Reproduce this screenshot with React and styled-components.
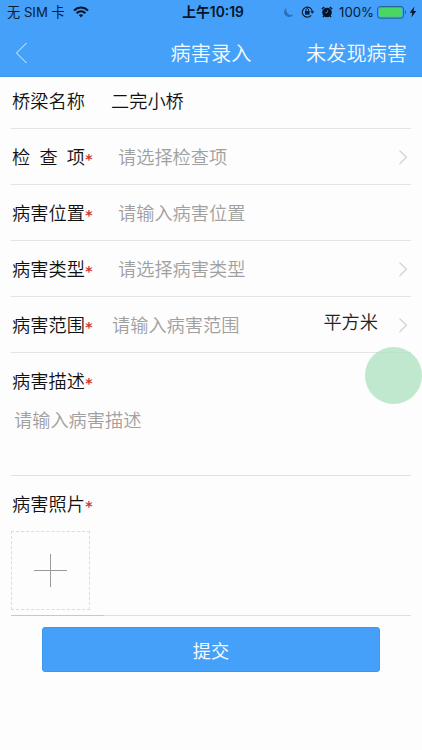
import styled, { createGlobalStyle } from 'styled-components';

const GlobalStyle = createGlobalStyle`
  * {
    box-sizing: border-box;
  }

  body {
    margin: 0;
    background-color: #fdfdfd;
    font-family: "Noto Sans CJK SC", sans-serif;
    font-weight: 350;
  }
`;

const Wrapper = styled.div`
  position: relative;
  height: 750px;
  overflow: hidden;
  background-color: #fdfdfd;
`;

const Header = styled.header`
  height: 77px;
  background-color: #44a0f8;
  border-bottom: 1px solid #4497e2;
`;

const StatusBar = styled.div`
  height: 24px;
  display: grid;
  grid-template-columns: 1fr auto 1fr;
  align-items: center;
  padding: 0 5px 0 7px;
  color: #0a1c33;
  font-family: Inter, "Noto Sans CJK SC", sans-serif;
  font-size: 13.2px;
  font-weight: 400;
  line-height: 24px;
  white-space: nowrap;
`;

const Carrier = styled.div`
  display: flex;
  align-items: center;
  gap: 8px;
`;

const Time = styled.div`
  padding-left: 2px;
  font-size: 13.8px;
  font-weight: 600;
  color: #061326;
`;

const StatusIcons = styled.div`
  display: flex;
  align-items: center;
  justify-content: flex-end;
`;

const IconSlot = styled.span`
  display: flex;
  margin-left: ${(props) => props.$left};
`;

const Percent = styled.span`
  margin: 0 3px 0 6px;
`;

const NavBar = styled.div`
  height: 53px;
  display: grid;
  grid-template-columns: 1fr auto 1fr;
  align-items: center;
  padding: 5px 15px 0 15px;
  color: #f4faff;
  font-size: 20.2px;
  line-height: 30px;
  white-space: nowrap;
`;

const NavAction = styled.div`
  text-align: right;
`;

const Form = styled.main`
  padding: 0 11px;
  font-size: 18.2px;
  line-height: 26px;
  color: #111;
  white-space: nowrap;
`;

const Row = styled.div`
  height: ${(props) => (props.$first ? '52px' : '56px')};
  display: flex;
  align-items: center;
  padding-bottom: ${(props) => (props.$first ? '5px' : '1px')};
  border-bottom: 1px solid #e4e4e4;
`;

const Block = styled.div`
  height: ${(props) => props.$height};
  padding-top: 14px;
  border-bottom: 1px solid #e0e0e0;
`;

const LabelBox = styled.div`
  height: 26px;
  display: flex;
  align-items: center;
  padding-left: 1px;
`;

const LabelText = styled.div`
  width: 73px;
  display: flex;
  justify-content: space-between;
`;

const Star = styled.span`
  width: 8px;
  padding-top: 5px;
  text-align: center;
  font-family: "DejaVu Sans", sans-serif;
  font-size: 14px;
  font-weight: 700;
  line-height: 18px;
  color: #c9353a;
`;

const Value = styled.div`
  flex: 1;
  margin-left: ${(props) => props.$left};
  color: ${(props) => (props.$filled ? '#111' : '#a0a0a0')};
`;

const Unit = styled.div`
  margin-right: 20px;
  padding-bottom: 6px;
  color: #222;
`;

const Chevron = styled.svg`
  width: 10px;
  height: 16px;
  margin: 1px 3px 0 0;
`;

const Description = styled.div`
  padding: 13px 0 0 3px;
  color: #a0a0a0;
`;

const AddPhoto = styled.div`
  width: 79px;
  height: 79px;
  margin-top: 15px;
  display: flex;
  align-items: center;
  justify-content: center;
  border: 1px dashed #dcdcdc;
`;

const PhotoLine = styled.div`
  width: 93px;
  height: 1px;
  margin-top: 5px;
  background-color: #c8c8c8;
`;

const SubmitButton = styled.button`
  display: block;
  width: 338px;
  height: 45px;
  margin: 11px 0 0 31px;
  padding: 0;
  border: 1px solid #3d97ec;
  border-radius: 3px;
  background-color: #44a0f8;
  color: #f7fbff;
  font-family: inherit;
  font-size: 18.2px;
  font-weight: 400;
  line-height: 26px;
`;

const FloatingBall = styled.div`
  position: absolute;
  left: 365px;
  top: 347px;
  width: 57px;
  height: 57px;
  border-radius: 50%;
  background-color: rgba(173, 226, 193, 0.78);
`;

function Label({ text, required = true }) {
  return (
    <LabelBox>
      <LabelText>
        {text.split('').map((char, i) => (
          <span key={i}>{char}</span>
        ))}
      </LabelText>
      {required && <Star>*</Star>}
    </LabelBox>
  );
}

function Arrow() {
  return (
    <Chevron viewBox="0 0 10 16" fill="none" stroke="#d2d2d2" strokeWidth="1.2">
      <path d="M1.5 1.5L8.5 8.2L1.5 15" />
    </Chevron>
  );
}

function WifiIcon() {
  return (
    <svg width="16" height="12" viewBox="0 0 16 12" fill="none" stroke="#061326" strokeWidth="2.1">
      <path d="M1 4.4C5 .6 11 .6 15 4.4" />
      <path d="M3.6 7.2C6.2 4.8 9.8 4.8 12.4 7.2" />
      <path d="M5.8 9L8 11.5L10.2 9C8.9 7.9 7.1 7.9 5.8 9Z" fill="#061326" stroke="none" />
    </svg>
  );
}

function MoonIcon() {
  return (
    <svg width="11" height="11" viewBox="0 0 11 11">
      <path d="M3.6 .7A5 5 0 1 0 10.4 7.5A5.2 5.2 0 0 1 3.6 .7Z" fill="#2c6fb5" />
    </svg>
  );
}

function LockIcon() {
  return (
    <svg width="14" height="12" viewBox="0 0 14 12" fill="none" stroke="#0a1c33">
      <path d="M10.2 9.3A5 5 0 1 1 11.3 5.5" strokeWidth="1.1" />
      <path d="M9.3 5.2H13.3L11.3 7.8Z" fill="#0a1c33" stroke="none" />
      <path d="M4 5H8.6V8.6H4Z" fill="#0a1c33" stroke="none" />
      <path d="M4.9 5.2V4.1A1.4 1.4 0 0 1 7.7 4.1V5.2" strokeWidth="1" />
    </svg>
  );
}

function AlarmIcon() {
  return (
    <svg width="12" height="12" viewBox="0 0 12 12">
      <circle cx="6" cy="6.5" r="4.8" fill="#061326" />
      <path d="M.8 3L3.2 1M11.2 3L8.8 1M2.8 10L2 11.2M9.2 10L10 11.2" stroke="#061326" strokeWidth="1.5" />
      <path d="M6.8 4.3L6 6.7H4.4" stroke="#44a0f8" strokeWidth=".8" fill="none" />
    </svg>
  );
}

function BatteryIcon() {
  return (
    <svg width="30" height="13" viewBox="0 0 30 13">
      <rect x=".6" y=".6" width="26" height="11.6" rx="2.6" fill="none" stroke="#245e91" />
      <rect x="2" y="2" width="23.2" height="8.8" rx="1.5" fill="#49d663" />
      <path d="M28 4.6C29.4 5 29.4 7.8 28 8.2Z" fill="#245e91" />
    </svg>
  );
}

function BoltIcon() {
  return (
    <svg width="8" height="12" viewBox="0 0 8 12">
      <path d="M5.3 .6L.8 6.8H3.4L2.3 11.4L7.2 5H4.5Z" fill="#061326" />
    </svg>
  );
}

function App() {
  return (
    <Wrapper>
      <GlobalStyle />
      <Header>
        <StatusBar>
          <Carrier>
            <span>无 SIM 卡</span>
            <WifiIcon />
          </Carrier>
          <Time>上午10:19</Time>
          <StatusIcons>
            <MoonIcon />
            <IconSlot $left="7px">
              <LockIcon />
            </IconSlot>
            <IconSlot $left="6px">
              <AlarmIcon />
            </IconSlot>
            <Percent>100%</Percent>
            <BatteryIcon />
            <IconSlot $left="2px">
              <BoltIcon />
            </IconSlot>
          </StatusIcons>
        </StatusBar>
        <NavBar>
          <svg width="13" height="22" viewBox="0 0 13 22" fill="none" stroke="#e6f3ff" strokeWidth="1">
            <path d="M11.5 1L1.5 11L11.5 21" />
          </svg>
          <div>病害录入</div>
          <NavAction>未发现病害</NavAction>
        </NavBar>
      </Header>
      <Form>
        <Row $first>
          <Label text="桥梁名称" required={false} />
          <Value $left="26px" $filled>二完小桥</Value>
        </Row>
        <Row>
          <Label text="检查项" />
          <Value $left="25px">请选择检查项</Value>
          <Arrow />
        </Row>
        <Row>
          <Label text="病害位置" />
          <Value $left="25px">请输入病害位置</Value>
        </Row>
        <Row>
          <Label text="病害类型" />
          <Value $left="25px">请选择病害类型</Value>
          <Arrow />
        </Row>
        <Row>
          <Label text="病害范围" />
          <Value $left="19px">请输入病害范围</Value>
          <Unit>平方米</Unit>
          <Arrow />
        </Row>
        <Block $height="123px">
          <Label text="病害描述" />
          <Description>请输入病害描述</Description>
        </Block>
        <Block $height="140px">
          <Label text="病害照片" />
          <AddPhoto>
            <svg width="33" height="33" viewBox="0 0 33 33" stroke="#999" strokeWidth="1">
              <path d="M16.5 0V33M0 16.5H33" />
            </svg>
          </AddPhoto>
          <PhotoLine />
        </Block>
        <SubmitButton>提交</SubmitButton>
      </Form>
      <FloatingBall />
    </Wrapper>
  );
}

export default App;
